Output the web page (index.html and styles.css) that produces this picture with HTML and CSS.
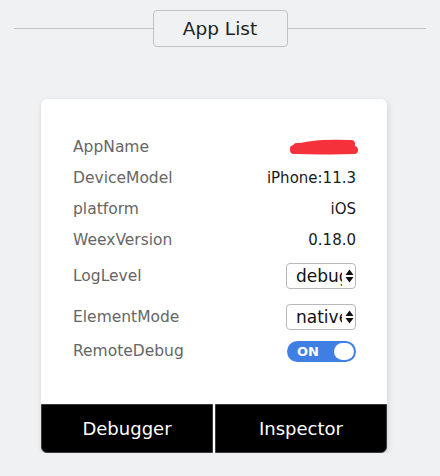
FILE: index.html
```html
<!DOCTYPE html>
<html>
<head>
<meta charset="utf-8">
<link rel="stylesheet" href="styles.css">
</head>
<body>
<div class="header">
  <div class="rule"></div>
  <div class="title">App List</div>
  <div class="rule"></div>
</div>
<div class="card">
  <div class="rows">
    <div class="row"><span class="label">AppName</span>
      <svg class="scribble" width="70" height="16" viewBox="0 0 70 16"><path d="M5 10 C 15 6, 35 4, 62 5 M5 11 C 20 11, 40 12, 65 11 M8 8 C 25 7, 45 7, 62 8" stroke="#f5323c" stroke-width="8" stroke-linecap="round" fill="none"/></svg>
    </div>
    <div class="row"><span class="label">DeviceModel</span><span class="value">iPhone:11.3</span></div>
    <div class="row"><span class="label">platform</span><span class="value">iOS</span></div>
    <div class="row"><span class="label">WeexVersion</span><span class="value">0.18.0</span></div>
    <div class="row row-sel1"><span class="label">LogLevel</span>
      <div class="select"><span class="sel-text">debug</span><svg class="arrows" width="9" height="14" viewBox="0 0 9 14"><path d="M4.5 0.5 L8.5 6 L0.5 6 Z M0.5 8 L8.5 8 L4.5 13.5 Z" fill="#111"/></svg></div>
    </div>
    <div class="row row-sel2"><span class="label">ElementMode</span>
      <div class="select"><span class="sel-text">native</span><svg class="arrows" width="9" height="14" viewBox="0 0 9 14"><path d="M4.5 0.5 L8.5 6 L0.5 6 Z M0.5 8 L8.5 8 L4.5 13.5 Z" fill="#111"/></svg></div>
    </div>
    <div class="row row-tog"><span class="label">RemoteDebug</span>
      <div class="toggle"><span class="tog-text">ON</span><span class="knob"></span></div>
    </div>
  </div>
  <div class="buttons">
    <div class="btn btn-left">Debugger</div>
    <div class="btn btn-right">Inspector</div>
  </div>
</div>
</body>
</html>
```
FILE: styles.css
```css
html, body {
  margin: 0;
  padding: 0;
  background: #f0f1f3;
  font-family: "DejaVu Sans", sans-serif;
}
.header {
  display: flex;
  align-items: center;
  padding: 10px 14px 0 14px;
}
.rule {
  flex: 1;
  height: 1px;
  background: #c4c4c4;
}
.title {
  width: 133px;
  height: 35px;
  border: 1px solid #c2c2c2;
  border-radius: 4px;
  display: flex;
  align-items: center;
  justify-content: center;
  font-size: 18.5px;
  color: #222;
}
.card {
  margin: 52px 0 0 41px;
  width: 346px;
  background: #fff;
  border-radius: 6px;
  box-shadow: 1px 2px 6px rgba(0,0,0,0.13);
}
.rows {
  padding: 32px 31px 39px 31px;
}
.row {
  height: 31px;
  display: flex;
  align-items: center;
  justify-content: space-between;
}
.row-sel1 { height: 42px; }
.row-sel2 { height: 40px; }
.row-tog { height: 28px; }
.label {
  font-size: 15.5px;
  color: #666;
  padding-left: 1px;
}
.value {
  font-size: 15px;
  color: #1a1a1a;
}
.scribble {
  margin-right: -3px;
}
.select {
  width: 68px;
  height: 24px;
  border: 1px solid #b8b8b8;
  border-radius: 4px;
  display: flex;
  align-items: center;
  box-sizing: content-box;
}
.sel-text {
  width: 46px;
  margin-left: 9px;
  overflow: hidden;
  white-space: nowrap;
  font-size: 17px;
  color: #111;
}
.arrows {
  margin-left: 3px;
}
.toggle {
  width: 69px;
  height: 21px;
  border-radius: 11px;
  background: #3f7fe4;
  display: flex;
  align-items: center;
  justify-content: space-between;
  box-sizing: border-box;
  padding: 0 2px 0 10px;
}
.tog-text {
  color: #fff;
  font-weight: bold;
  font-size: 13px;
}
.knob {
  width: 20px;
  height: 17px;
  border-radius: 9px;
  background: #fff;
}
.buttons {
  display: flex;
  gap: 2px;
  height: 49px;
}
.btn {
  flex: 1;
  background: #000;
  border: 1px solid #3a3a3a;
  color: #fff;
  font-size: 18px;
  display: flex;
  align-items: center;
  justify-content: center;
}
.btn-left { border-radius: 0 0 0 6px; }
.btn-right { border-radius: 0 0 6px 0; }
```
